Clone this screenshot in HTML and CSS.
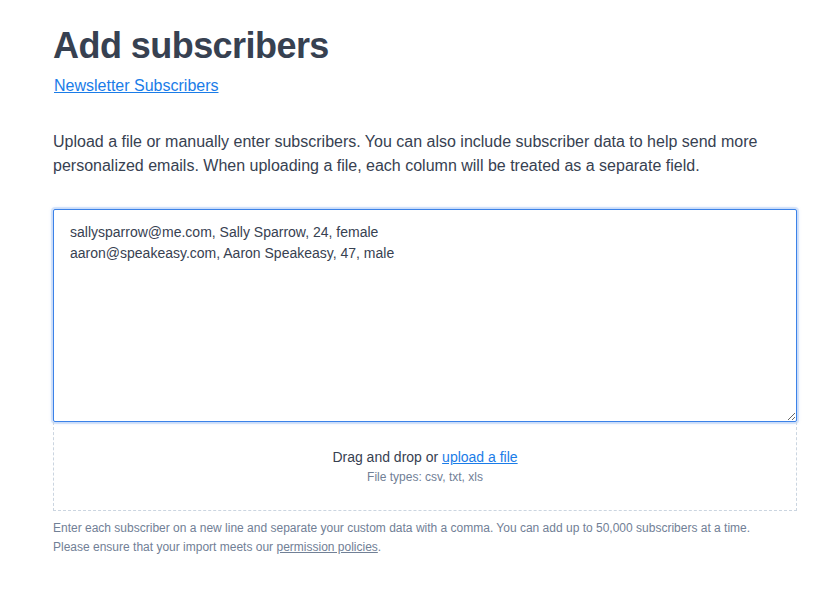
FILE: index.html
```html
<!DOCTYPE html>
<html>
<head>
<meta charset="utf-8">
<link rel="stylesheet" href="styles.css">
</head>
<body>
<main class="page">
  <h1 class="title">Add subscribers</h1>
  <a class="crumb" href="#">Newsletter Subscribers</a>
  <p class="intro">Upload a file or manually enter subscribers. You can also include subscriber data to help send more personalized emails. When uploading a file, each column will be treated as a separate field.</p>
  <div class="field">
    <textarea class="entry">sallysparrow@me.com, Sally Sparrow, 24, female
aaron@speakeasy.com, Aaron Speakeasy, 47, male</textarea>
    <div class="drop">
      <div class="drop-main">Drag and drop or <a href="#">upload a file</a></div>
      <div class="drop-types">File types: csv, txt, xls</div>
    </div>
  </div>
  <p class="help">Enter each subscriber on a new line and separate your custom data with a comma. You can add up to 50,000 subscribers at a time.<br>Please ensure that your import meets our <a href="#">permission policies</a>.</p>
</main>
</body>
</html>
```
FILE: styles.css
```css
* { box-sizing: border-box; }
html, body { margin: 0; padding: 0; background: #fff; }
body { font-family: "Liberation Sans", Arial, sans-serif; color: #374151; }
.page { padding: 22px 27px 0 53px; display: flex; flex-direction: column; }
.title { margin: 0; font-size: 36px; line-height: 48px; font-weight: 700; color: #374151; letter-spacing: -0.55px; }
.crumb { align-self: flex-start; margin-top: 4px; margin-left: 1px; font-size: 16px; line-height: 24px; color: #1a7ce8; text-decoration: underline; }
.intro { margin: 32px 0 0; font-size: 16px; line-height: 24px; color: #374151; }
.field { margin-top: 31px; display: flex; flex-direction: column; }
.entry { display: block; width: 100%; height: 213px; margin: 0; padding: 12px 16px; font-family: "Liberation Sans", Arial, sans-serif; font-size: 14px; line-height: 21px; color: #374151; border: 1px solid #3b82e8; border-radius: 2px; box-shadow: 0 0 0 2px rgba(59,130,232,0.15), 0 0 4px rgba(59,130,232,0.35); outline: none; resize: vertical; }
.drop { height: 89px; border: 1px dashed #cbd5e0; border-top: none; display: flex; flex-direction: column; align-items: center; justify-content: center; padding-top: 2px; }
.drop-main { font-size: 14px; line-height: 20px; color: #374151; }
.drop-main a { color: #1a7ce8; text-decoration: underline; }
.drop-types { font-size: 12px; line-height: 20px; color: #718096; }
.help { margin: 8px 0 0; font-size: 12px; line-height: 19px; color: #718096; }
.help a { color: #718096; text-decoration: underline; }
```
